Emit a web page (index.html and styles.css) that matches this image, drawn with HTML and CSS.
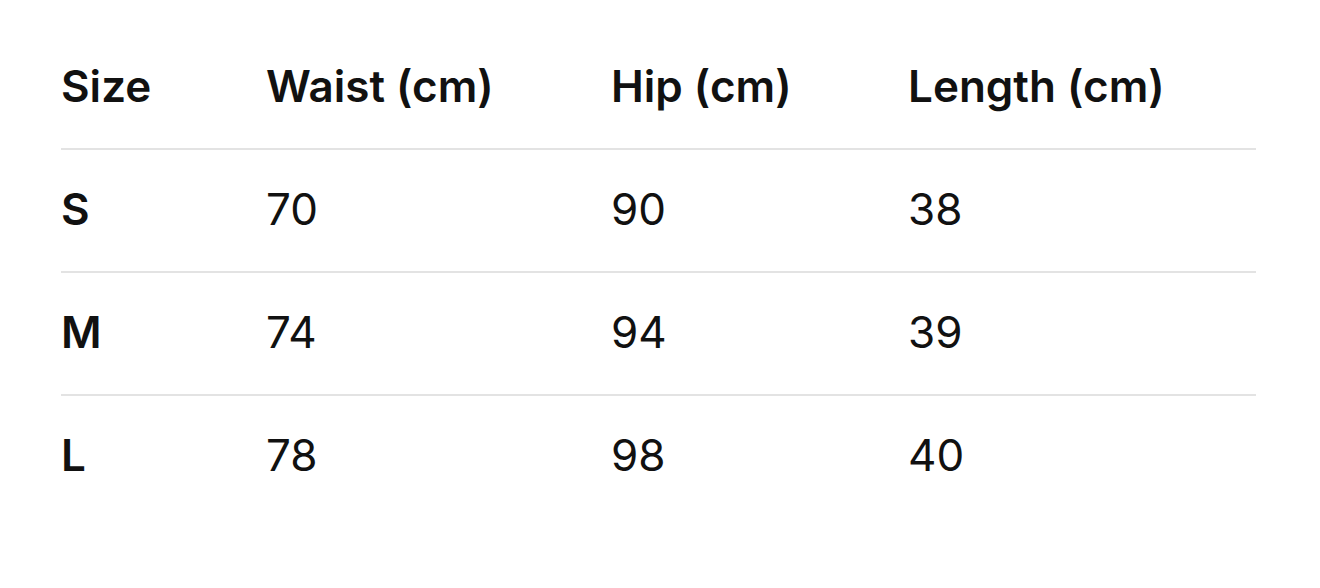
FILE: index.html
```html
<!DOCTYPE html>
<html>
<head>
<meta charset="utf-8">
<link rel="stylesheet" href="styles.css">
</head>
<body>
<div class="page">
  <div class="table">
    <div class="row head">
      <div class="cell">Size</div>
      <div class="cell">Waist (cm)</div>
      <div class="cell">Hip (cm)</div>
      <div class="cell">Length (cm)</div>
    </div>
    <div class="row">
      <div class="cell key">S</div>
      <div class="cell">70</div>
      <div class="cell">90</div>
      <div class="cell">38</div>
    </div>
    <div class="row">
      <div class="cell key">M</div>
      <div class="cell">74</div>
      <div class="cell">94</div>
      <div class="cell">39</div>
    </div>
    <div class="row last">
      <div class="cell key">L</div>
      <div class="cell">78</div>
      <div class="cell">98</div>
      <div class="cell">40</div>
    </div>
  </div>
</div>
</body>
</html>
```
FILE: styles.css
```css
html, body {
  margin: 0;
  padding: 0;
  background: #ffffff;
}
body {
  font-family: Inter, "Noto Sans", sans-serif;
  color: #111111;
}
.page {
  padding: 27px 64px 0 61px;
}
.table {
  width: 1195px;
  display: flex;
  flex-direction: column;
}
.row {
  display: grid;
  grid-template-columns: 205px 345px 297px 1fr;
  height: 121px;
  align-items: center;
  border-bottom: 2px solid #e3e3e3;
  font-size: 44px;
  font-weight: 400;
}
.row.last {
  border-bottom: none;
}
.head .cell,
.key {
  font-weight: 600;
}
.cell {
  line-height: 1;
  white-space: nowrap;
  padding-bottom: 4px;
}
```
